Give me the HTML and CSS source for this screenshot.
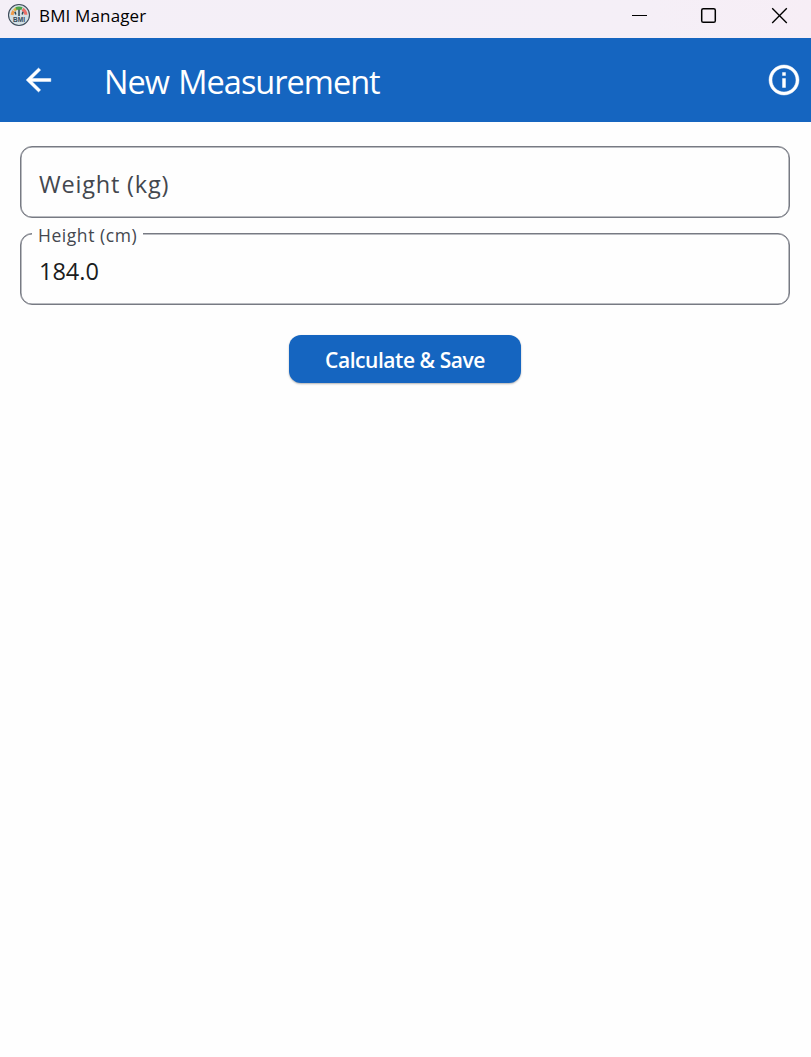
FILE: index.html
```html
<!DOCTYPE html>
<html lang="en">
<head>
<meta charset="utf-8">
<title>BMI Manager</title>
<link rel="stylesheet" href="styles.css">
</head>
<body>
<header class="titlebar">
  <svg class="app-icon" width="24" height="24" viewBox="0 0 24 24">
    <circle cx="12" cy="12" r="10.5" fill="#d3e0e5" stroke="#3e4c5a" stroke-width="1.1"/>
    <path d="M5.1 12a7 7 0 0 1 1.7-4" fill="none" stroke="#ef9b4b" stroke-width="3"/>
    <path d="M7.2 7.5a7 7 0 0 1 2.6-1.8" fill="none" stroke="#d8b347" stroke-width="3"/>
    <path d="M15.5 6.1a7 7 0 0 1 3.4 5.7" fill="none" stroke="#e9706a" stroke-width="3"/>
    <path d="M12 6v7M8 8.8l.8 2.7M16 8.8l-.8 2.7" stroke="#2c4650" stroke-width="1.5"/>
    <path d="M9 5.6a7 7 0 0 1 6 0" fill="none" stroke="#4da447" stroke-width="3"/>
    <text class="icon-text" x="12" y="19" text-anchor="middle">BMI</text>
  </svg>
  <span class="app-name">BMI Manager</span>
  <div class="controls">
    <svg width="70" height="38" viewBox="0 0 70 38"><path d="M12 15.5h15" stroke="#000" stroke-width="1"/></svg>
    <svg width="70" height="38" viewBox="0 0 70 38"><rect x="11.7" y="8.7" width="13.6" height="13.6" rx="1.6" fill="none" stroke="#000" stroke-width="1.5"/></svg>
    <svg width="44" height="38" viewBox="0 0 44 38"><path d="M5.2 8.3l14.6 14.6M19.8 8.3L5.2 22.9" stroke="#000" stroke-width="1.35"/></svg>
  </div>
</header>
<nav class="appbar">
  <svg class="back" width="37" height="36" viewBox="0 0 24 24" preserveAspectRatio="none"><path fill="#fff" stroke="#fff" stroke-width=".3" d="M20 11H7.83l5.59-5.59L12 4l-8 8 8 8 1.41-1.41L7.83 13H20v-2z"/></svg>
  <h1 class="heading">New Measurement</h1>
  <svg class="info" width="36" height="36" viewBox="0 0 24 24"><path fill="#fff" stroke="#fff" stroke-width=".3" d="M11 7h2v2h-2zm0 4h2v6h-2zm1-9C6.48 2 2 6.48 2 12s4.48 10 10 10 10-4.48 10-10S17.52 2 12 2zm0 18c-4.41 0-8-3.59-8-8s3.59-8 8-8 8 3.59 8 8-3.59 8-8 8z"/></svg>
</nav>
<main class="form">
  <div class="field"><span class="placeholder">Weight (kg)</span></div>
  <div class="field"><span class="label">Height (cm)</span><span class="value">184.0</span></div>
  <button class="save" type="button">Calculate &amp; Save</button>
</main>
</body>
</html>
```
FILE: styles.css
```css
* { box-sizing: border-box; }
body {
  margin: 0;
  min-height: 1057px;
  background: #fefefe;
  font-family: "Open Sans", "Noto Sans", sans-serif;
  font-weight: 400;
}
svg { display: block; flex: none; }
.titlebar {
  display: flex;
  height: 38px;
  background: linear-gradient(90deg, #f4eff7, #f5eff7 80%, #f7eef6);
}
.app-icon { margin: 3px 0 0 7px; }
.icon-text { font: 700 6.5px "Liberation Sans", sans-serif; fill: #33485a; }
.app-name {
  margin-left: 8px;
  font-size: 17px;
  line-height: 32px;
  letter-spacing: 0.15px;
  color: #000;
  white-space: nowrap;
}
.controls { display: flex; margin-left: auto; width: 191px; }
.controls svg:last-child { margin-left: 7px; }
.appbar {
  display: flex;
  align-items: center;
  height: 84px;
  padding: 0 9px 0 20px;
  background: #1565c0;
  color: #fff;
}
.heading {
  flex: 1;
  margin: 4px 0 0 47px;
  font-size: 32.5px;
  font-weight: 400;
  line-height: 48px;
  letter-spacing: -1px;
  word-spacing: 2px;
  white-space: nowrap;
}
.form {
  display: flex;
  flex-direction: column;
  align-items: center;
  gap: 15px;
  padding: 24px 21px 0 20px;
}
.field {
  position: relative;
  width: 100%;
  height: 72px;
  padding: 20px 0 0 18px;
  border: 1px solid #777a83;
  border-radius: 12px;
  box-shadow: inset 0 0 0 0.5px #777a83;
  font-size: 23.5px;
  line-height: 34px;
  white-space: nowrap;
}
.placeholder { color: #43474e; letter-spacing: 0.8px; }
.value { color: #1a1c20; }
.label {
  position: absolute;
  left: 11px;
  top: -13px;
  width: 111px;
  padding-left: 6px;
  background: #fefefe;
  color: #43474e;
  font-size: 17.5px;
  line-height: 28px;
  letter-spacing: 0.55px;
}
.save {
  width: 232px;
  height: 48px;
  margin-top: 15px;
  padding: 3px 0 0;
  border: 0;
  border-radius: 12px;
  background: #1565c0;
  box-shadow: 0 1px 2px rgba(0, 0, 0, 0.3);
  color: #fff;
  font: 600 21px/45px "Open Sans", "Noto Sans", sans-serif;
  letter-spacing: -0.45px;
  white-space: nowrap;
}
```
